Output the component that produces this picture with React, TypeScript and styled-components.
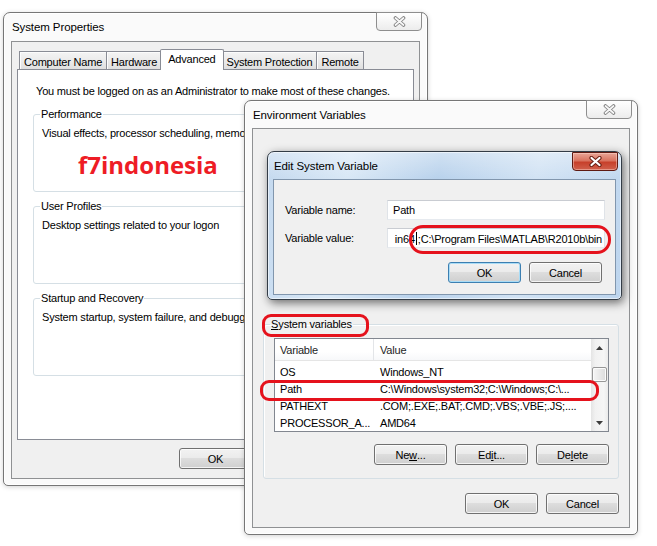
import React from "react";
import styled, { createGlobalStyle, css } from "styled-components";

const GlobalStyle = createGlobalStyle`
  html, body { margin: 0; padding: 0; background: #ffffff; }
  body {
    font-family: "Liberation Sans", Arial, sans-serif;
    font-size: 11px;
    letter-spacing: -0.2px;
    color: #000;
  }
  * { box-sizing: border-box; }
  u { letter-spacing: 0; }
`;

const Desktop = styled.div`
  position: relative;
  width: 657px;
  height: 546px;
  overflow: hidden;
  background: #ffffff;
`;

type WinProps = {
  $x: number;
  $y: number;
  $w: number;
  $h: number;
  $pad: number;
  $z: number;
  $glass?: boolean;
};

const glassBg = css`
  background:
    linear-gradient(180deg, rgba(255, 255, 255, 0.35) 0px, rgba(255, 255, 255, 0) 26px),
    linear-gradient(100deg, #c4d9ef 0%, #d9e8f6 22%, #b9d2ec 46%, #d2e3f4 72%, #bdd5ee 100%);
  border: 1px solid #333c46;
  box-shadow: inset 0 0 0 1px rgba(255, 255, 255, 0.55), 2px 3px 10px rgba(0, 0, 0, 0.55);
`;

const basicBg = css`
  background: #fafafa;
  border: 1px solid #767676;
  box-shadow: inset 0 0 0 1px #ffffff, 0 1px 5px rgba(0, 0, 0, 0.18);
`;

const Win = styled.section<WinProps>`
  position: absolute;
  left: ${(p) => p.$x}px;
  top: ${(p) => p.$y}px;
  width: ${(p) => p.$w}px;
  height: ${(p) => p.$h}px;
  z-index: ${(p) => p.$z};
  display: flex;
  flex-direction: column;
  padding: 0 ${(p) => p.$pad}px ${(p) => p.$pad - 1}px;
  border-radius: 7px 7px 5px 5px;
  ${(p) => (p.$glass ? glassBg : basicBg)}
`;

const TitleBar = styled.header<{ $h: number }>`
  height: ${(p) => p.$h}px;
  flex: none;
  display: flex;
  align-items: center;
`;

const Title = styled.span`
  font-size: 11.5px;
  padding-left: 1px;
  letter-spacing: -0.1px;
`;

const CloseBtn = styled.div<{ $active?: boolean }>`
  align-self: flex-start;
  margin-left: auto;
  margin-right: -2px;
  margin-top: ${(p) => (p.$active ? 0 : -1)}px;
  width: 46px;
  height: 19px;
  display: flex;
  align-items: center;
  justify-content: center;
  border-radius: 0 0 4px 4px;
  ${(p) =>
    p.$active
      ? css`
          border: 1px solid #5e1a12;
          background: linear-gradient(180deg, #e9a597 0%, #d9735f 45%, #c7402b 55%, #d0604c 100%);
          box-shadow: inset 0 0 0 1px rgba(255, 220, 210, 0.45);
        `
      : css`
          border: 1px solid #8e8e8e;
          background: linear-gradient(180deg, #ffffff 0%, #f6f6f6 50%, #ececec 100%);
        `}
`;

const CloseGlyph = ({ active }: { active?: boolean }) => (
  <svg width="13" height="11" viewBox="0 0 13 11">
    <path
      d="M2.5 2 L10.5 9 M10.5 2 L2.5 9"
      stroke={active ? "#6a2015" : "#808080"}
      strokeWidth={active ? 4.2 : 3.6}
      strokeLinecap="round"
      fill="none"
    />
    <path
      d="M2.5 2 L10.5 9 M10.5 2 L2.5 9"
      stroke={active ? "#ffffff" : "#f7f7f7"}
      strokeWidth={active ? 2.2 : 1.8}
      strokeLinecap="round"
      fill="none"
    />
  </svg>
);

const Client = styled.div<{ $pad: string; $glass?: boolean }>`
  flex: 1;
  min-height: 0;
  display: flex;
  flex-direction: column;
  padding: ${(p) => p.$pad};
  background: #f0f0f0;
  border: 1px solid ${(p) => (p.$glass ? "#8196ad" : "#8f9193")};
`;

/* ---------- tabs ---------- */

const TabStrip = styled.div`
  display: flex;
  align-items: flex-end;
  height: 21px;
  margin-bottom: -1px;
  padding-left: 2px;
`;

const Tab = styled.div<{ $active?: boolean }>`
  position: relative;
  display: flex;
  align-items: center;
  padding: 0 4px;
  border: 1px solid #898c95;
  border-bottom: none;
  white-space: nowrap;
  ${(p) =>
    p.$active
      ? css`
          z-index: 2;
          height: 21px;
          margin: 0 -1px 0 -2px;
          padding: 0 7px 2px;
          background: #ffffff;
          border-radius: 2px 2px 0 0;
        `
      : css`
          z-index: 1;
          height: 18px;
          margin: 0 0 1px -1px;
          padding-top: 2px;
          background: linear-gradient(180deg, #f4f4f4 0%, #ebebeb 50%, #dfdfdf 100%);
          box-shadow: inset 1px 1px 0 #fcfcfc;
        `}
  &:first-child {
    margin-left: 0;
  }
`;

const TabPanel = styled.div`
  flex: 1;
  min-height: 0;
  display: flex;
  flex-direction: column;
  background: #ffffff;
  border: 1px solid #898c95;
  padding: 14px 15px 0;
`;

const Intro = styled.p`
  margin: 0 0 9px 3px;
  line-height: 14px;
  white-space: nowrap;
`;

const Group = styled.fieldset<{ $h: number }>`
  margin: 0 0 7px;
  padding: 0 8px;
  min-width: 0;
  height: ${(p) => p.$h}px;
  flex: none;
  border: 1px solid #d5dfe5;
  border-radius: 3px;
  box-shadow: inset 1px 1px 0 #ffffff;
`;

const Legend = styled.legend<{ $shift: number }>`
  padding: 0 1px;
  margin-left: ${(p) => p.$shift}px;
  line-height: 14px;
`;

const Desc = styled.div`
  margin-top: 5px;
  line-height: 14px;
  white-space: nowrap;
`;

const Watermark = styled.div`
  margin: 10px 0 0 36px;
  font-family: "Open Sans", "Liberation Sans", sans-serif;
  font-weight: 700;
  font-size: 24px;
  line-height: 30px;
  letter-spacing: 0;
  color: #ee1c25;
`;

/* ---------- buttons ---------- */

const ButtonRow = styled.div<{ $mt: number; $pb: number; $pr?: number }>`
  flex: none;
  display: flex;
  justify-content: flex-end;
  gap: 8px;
  margin-top: ${(p) => p.$mt}px;
  padding-bottom: ${(p) => p.$pb}px;
  padding-right: ${(p) => p.$pr ?? 0}px;
`;

const Button = styled.button<{ $default?: boolean }>`
  width: 73px;
  height: 21px;
  padding: 0;
  font: inherit;
  letter-spacing: inherit;
  color: #000;
  border-radius: 3px;
  border: 1px solid ${(p) => (p.$default ? "#3c7fb1" : "#707070")};
  background: linear-gradient(180deg, #f2f2f2 0%, #ebebeb 46%, #dddddd 50%, #cfcfcf 100%);
  box-shadow: inset 0 0 0 1px ${(p) => (p.$default ? "#a9dcf6" : "rgba(255,255,255,0.75)")};
  u {
    text-decoration: underline;
  }
`;

/* ---------- edit dialog ---------- */

const FieldRow = styled.div`
  display: flex;
  align-items: center;
  margin-bottom: 8px;
`;

const FieldLabel = styled.label`
  width: 102px;
  flex: none;
`;

const TextBox = styled.div<{ $end?: boolean }>`
  width: 219px;
  height: 20px;
  display: flex;
  align-items: center;
  justify-content: ${(p) => (p.$end ? "flex-end" : "flex-start")};
  overflow: hidden;
  white-space: nowrap;
  padding: ${(p) => (p.$end ? "0 2px 0 5px" : "0 5px")};
  background: #ffffff;
  border: 1px solid;
  border-color: #c9ccd2 #dfe3e8 #e6eaef #dfe3e8;
  span {
    flex: none;
  }
`;

const Caret = styled.i`
  display: inline-block;
  width: 1px;
  height: 13px;
  background: #000;
  vertical-align: -2px;
  margin: 0 1px;
`;

/* ---------- list view ---------- */

const Spacer = styled.div`
  flex: 1;
`;

const SysGroup = styled.fieldset`
  margin: 0;
  padding: 0 9px 0 10px;
  min-width: 0;
  height: 162px;
  flex: none;
  display: flex;
  flex-direction: column;
  border: 1px solid #d5dfe5;
  border-radius: 3px;
  box-shadow: inset 1px 1px 0 #ffffff;
  u {
    text-decoration: underline;
  }
`;

const ListView = styled.div`
  margin-top: 7px;
  height: 94px;
  flex: none;
  display: flex;
  background: #ffffff;
  border: 1px solid #828790;
  overflow: hidden;
`;

const ListBody = styled.div`
  flex: 1;
  min-width: 0;
  display: flex;
  flex-direction: column;
`;

const Cols = css`
  display: grid;
  grid-template-columns: 98px 1fr;
`;

const HeaderRow = styled.div`
  ${Cols};
  height: 22px;
  flex: none;
  border-bottom: 1px solid #e5e5e5;
  background: linear-gradient(180deg, #ffffff 0%, #ffffff 60%, #f7f8fa 100%);
`;

const HeaderCell = styled.div`
  display: flex;
  align-items: center;
  padding-left: 5px;
  color: #1e1e1e;
  & + & {
    border-left: 1px solid #e3e5e8;
    padding-left: 6px;
  }
`;

const Rows = styled.div`
  padding-top: 2px;
`;

const Row = styled.div`
  ${Cols};
  height: 17px;
`;

const Cell = styled.div`
  display: flex;
  align-items: center;
  padding-left: 5px;
  white-space: nowrap;
  overflow: hidden;
  & + & {
    padding-left: 7px;
  }
`;

const ScrollBar = styled.div`
  width: 17px;
  flex: none;
  display: flex;
  flex-direction: column;
  background: linear-gradient(90deg, #e4e4e4 0%, #f1f1f1 25%, #f6f6f6 75%, #ebebeb 100%);
`;

const ScrollArrow = styled.div`
  height: 17px;
  flex: none;
  display: flex;
  align-items: center;
  justify-content: center;
`;

const ScrollTrack = styled.div`
  flex: 1;
  padding: 11px 1px 0 1px;
`;

const Thumb = styled.div`
  height: 15px;
  border: 1px solid #979797;
  border-radius: 2px;
  background: linear-gradient(90deg, #f6f6f6 0%, #e9e9e9 50%, #dcdcdc 100%);
  box-shadow: inset 0 0 0 1px #fbfbfb;
`;

const Arrow = ({ up }: { up?: boolean }) => (
  <svg width="7" height="4" viewBox="0 0 7 4">
    <path d={up ? "M0 4 L3.5 0 L7 4 Z" : "M0 0 L3.5 4 L7 0 Z"} fill="#3c3c3c" />
  </svg>
);

/* ---------- annotations ---------- */

const Mark = styled.div<{ $x: number; $y: number; $w: number; $h: number; $r: number }>`
  position: absolute;
  left: ${(p) => p.$x}px;
  top: ${(p) => p.$y}px;
  width: ${(p) => p.$w}px;
  height: ${(p) => p.$h}px;
  border: 3px solid #e5121c;
  border-radius: ${(p) => p.$r}px;
  z-index: 10;
  pointer-events: none;
`;

const tabs = ["Computer Name", "Hardware", "Advanced", "System Protection", "Remote"];

const sysVars: [string, string][] = [
  ["OS", "Windows_NT"],
  ["Path", "C:\\Windows\\system32;C:\\Windows;C:\\..."],
  ["PATHEXT", ".COM;.EXE;.BAT;.CMD;.VBS;.VBE;.JS;...."],
  ["PROCESSOR_A...", "AMD64"],
];

export default function App() {
  return (
    <>
      <GlobalStyle />
      <Desktop>
        {/* System Properties */}
        <Win $x={3} $y={12} $w={425} $h={474} $pad={7} $z={1}>
          <TitleBar $h={28}>
            <Title>System Properties</Title>
            <CloseBtn>
              <CloseGlyph />
            </CloseBtn>
          </TitleBar>
          <Client $pad="7px 5px 0">
            <TabStrip>
              {tabs.map((t) => (
                <Tab key={t} $active={t === "Advanced"}>
                  {t}
                </Tab>
              ))}
            </TabStrip>
            <TabPanel>
              <Intro>You must be logged on as an Administrator to make most of these changes.</Intro>
              <Group $h={85}>
                <Legend $shift={-2}>Performance</Legend>
                <Desc>Visual effects, processor scheduling, memory usage and virtual memory</Desc>
                <Watermark>f7indonesia</Watermark>
              </Group>
              <Group $h={85}>
                <Legend $shift={-2}>User Profiles</Legend>
                <Desc>Desktop settings related to your logon</Desc>
              </Group>
              <Group $h={85}>
                <Legend $shift={-2}>Startup and Recovery</Legend>
                <Desc>System startup, system failure, and debugging information</Desc>
              </Group>
            </TabPanel>
            <ButtonRow $mt={8} $pb={9}>
              <Button>OK</Button>
              <Button>Cancel</Button>
              <Button>Apply</Button>
            </ButtonRow>
          </Client>
        </Win>

        {/* Environment Variables */}
        <Win $x={244} $y={100} $w={394} $h={435} $pad={7} $z={2}>
          <TitleBar $h={27}>
            <Title>Environment Variables</Title>
            <CloseBtn>
              <CloseGlyph />
            </CloseBtn>
          </TitleBar>
          <Client $pad="0 10px 0 10px">
            <Spacer />
            <SysGroup>
              <Legend $shift={-4}>
                <u>S</u>ystem variables
              </Legend>
              <ListView>
                <ListBody>
                  <HeaderRow>
                    <HeaderCell>Variable</HeaderCell>
                    <HeaderCell>Value</HeaderCell>
                  </HeaderRow>
                  <Rows>
                    {sysVars.map(([k, v]) => (
                      <Row key={k}>
                        <Cell>{k}</Cell>
                        <Cell>{v}</Cell>
                      </Row>
                    ))}
                  </Rows>
                </ListBody>
                <ScrollBar>
                  <ScrollArrow>
                    <Arrow up />
                  </ScrollArrow>
                  <ScrollTrack>
                    <Thumb />
                  </ScrollTrack>
                  <ScrollArrow>
                    <Arrow />
                  </ScrollArrow>
                </ScrollBar>
              </ListView>
              <ButtonRow $mt={12} $pb={0}>
                <Button>
                  Ne<u>w</u>...
                </Button>
                <Button>
                  Ed<u>i</u>t...
                </Button>
                <Button>
                  De<u>l</u>ete
                </Button>
              </ButtonRow>
            </SysGroup>
            <ButtonRow $mt={14} $pb={13}>
              <Button>OK</Button>
              <Button>Cancel</Button>
            </ButtonRow>
          </Client>
        </Win>

        {/* Edit System Variable */}
        <Win $x={267} $y={151} $w={355} $h={149} $pad={5} $z={3} $glass>
          <TitleBar $h={27}>
            <Title>Edit System Variable</Title>
            <CloseBtn $active>
              <CloseGlyph active />
            </CloseBtn>
          </TitleBar>
          <Client $pad="20px 10px 0 11px" $glass>
            <FieldRow>
              <FieldLabel>Variable name:</FieldLabel>
              <TextBox>Path</TextBox>
            </FieldRow>
            <FieldRow>
              <FieldLabel>Variable value:</FieldLabel>
              <TextBox $end>
                <span>
                  in64
                  <Caret />
                  ;C:\Program Files\MATLAB\R2010b\bin
                </span>
              </TextBox>
            </FieldRow>
            <ButtonRow $mt={6} $pb={0} $pr={3}>
              <Button $default>OK</Button>
              <Button>Cancel</Button>
            </ButtonRow>
          </Client>
        </Win>

        <Mark $x={409} $y={225} $w={202} $h={29} $r={14} />
        <Mark $x={262} $y={314} $w={107} $h={23} $r={9} />
        <Mark $x={260} $y={380} $w={339} $h={21} $r={9} />
      </Desktop>
    </>
  );
}
